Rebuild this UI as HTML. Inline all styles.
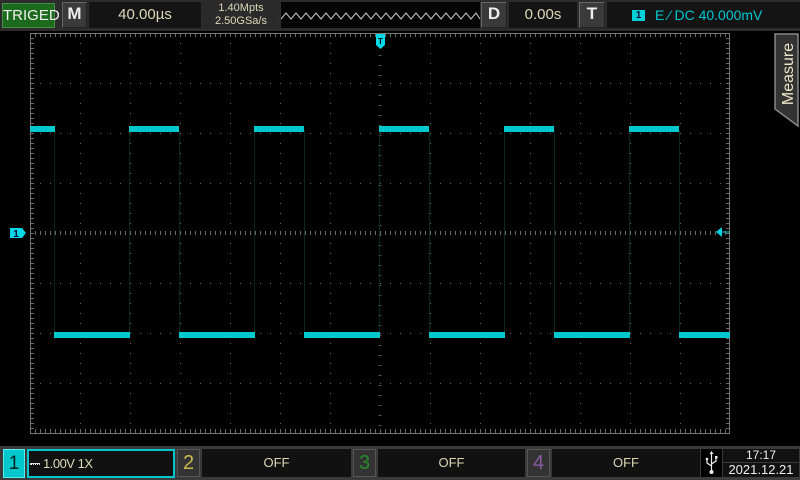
<!DOCTYPE html>
<html><head><meta charset="utf-8"><style>
body{margin:0;width:800px;height:480px;background:#000;overflow:hidden;position:relative;font-family:"Liberation Sans",sans-serif}
.a{position:absolute;box-sizing:border-box}
.btn{background:#3a3a3a;border:1px solid #666;border-right-color:#222;border-bottom-color:#222;color:#eee;font-weight:bold;font-size:17px;text-align:center;line-height:22px}
.dk{background:#141414;color:#ddd8b8;text-align:center}
</style></head><body>
<div class="a" style="left:0;top:0;width:800px;height:31px;background:#2c2c2c"></div>
<div class="a" style="left:2px;top:3px;width:53px;height:25px;background:#1c6a1c;border:1px solid #4a8a4a;color:#eee;font-size:15px;line-height:23px;text-align:center">TRIGED</div>
<div class="a btn" style="left:62px;top:2px;width:25px;height:26px">M</div>
<div class="a dk" style="left:89px;top:2px;width:112px;height:26px;font-size:15px;line-height:26px">40.00µs</div>
<div class="a dk" style="left:203px;top:2px;width:76px;height:12px;font-size:11px;line-height:12px;background:#2a2a2a">1.40Mpts</div>
<div class="a dk" style="left:203px;top:15px;width:76px;height:13px;font-size:11px;line-height:13px;background:#2a2a2a">2.50GSa/s</div>
<div class="a" style="left:281px;top:2px;width:199px;height:26px;background:#050505"></div>
<svg class="a" style="left:281px;top:2px" width="199" height="26"><polyline fill="none" stroke="#ccc" stroke-width="1" points="0,17 5,11 10,17 15,11 20,17 25,11 30,17 35,11 40,17 45,11 50,17 55,11 60,17 65,11 70,17 75,11 80,17 85,11 90,17 95,11 100,17 105,11 110,17 115,11 120,17 125,11 130,17 135,11 140,17 145,11 150,17 155,11 160,17 165,11 170,17 175,11 180,17 185,11 190,17 195,11 199,17"/></svg>
<div class="a btn" style="left:481px;top:2px;width:26px;height:26px">D</div>
<div class="a dk" style="left:509px;top:2px;width:68px;height:26px;font-size:15px;line-height:26px">0.00s</div>
<div class="a btn" style="left:579px;top:2px;width:26px;height:26px">T</div>
<div class="a" style="left:607px;top:2px;width:193px;height:26px;background:#141414"></div>
<div class="a" style="left:632px;top:10px;width:13px;height:11px;background:#00d0d8;color:#003;font-size:10px;font-weight:bold;line-height:11px;text-align:center">1</div>
<div class="a" style="left:655px;top:7px;color:#00c8d0;font-size:14px;line-height:17px">E ⁄ DC 40.000mV</div>

<svg class="a" style="left:0;top:0" width="800" height="480">
<g stroke="#6a6a6a" stroke-width="1">
<g stroke-dasharray="1 9">
<line x1="30" y1="83.5" x2="730" y2="83.5"/><line x1="30" y1="133.5" x2="730" y2="133.5"/><line x1="30" y1="183.5" x2="730" y2="183.5"/><line x1="30" y1="283.5" x2="730" y2="283.5"/><line x1="30" y1="333.5" x2="730" y2="333.5"/><line x1="30" y1="383.5" x2="730" y2="383.5"/>
<line x1="80.5" y1="33" x2="80.5" y2="433"/><line x1="130.5" y1="33" x2="130.5" y2="433"/><line x1="180.5" y1="33" x2="180.5" y2="433"/><line x1="230.5" y1="33" x2="230.5" y2="433"/><line x1="280.5" y1="33" x2="280.5" y2="433"/><line x1="330.5" y1="33" x2="330.5" y2="433"/><line x1="430.5" y1="33" x2="430.5" y2="433"/><line x1="480.5" y1="33" x2="480.5" y2="433"/><line x1="530.5" y1="33" x2="530.5" y2="433"/><line x1="580.5" y1="33" x2="580.5" y2="433"/><line x1="630.5" y1="33" x2="630.5" y2="433"/><line x1="680.5" y1="33" x2="680.5" y2="433"/>
</g>
<line x1="30" y1="233" x2="730" y2="233" stroke-width="4" stroke-dasharray="1 4"/>
<line x1="380" y1="33" x2="380" y2="433" stroke-width="3" stroke-dasharray="1 9" stroke-dashoffset="-2" stroke="#555"/>
<line x1="30" y1="35" x2="730" y2="35" stroke-width="4" stroke-dasharray="1 4"/>
<line x1="30" y1="431" x2="730" y2="431" stroke-width="4" stroke-dasharray="1 4"/>
<line x1="32" y1="33" x2="32" y2="433" stroke-width="4" stroke-dasharray="1 4"/>
<line x1="728" y1="33" x2="728" y2="433" stroke-width="4" stroke-dasharray="1 4"/>
</g>
<rect x="30.5" y="33.5" width="699" height="400" fill="none" stroke="#777"/>
<g stroke="#0a2620" stroke-width="1">
<line x1="54.5" y1="130" x2="54.5" y2="334"/><line x1="129.5" y1="130" x2="129.5" y2="334"/><line x1="179.5" y1="130" x2="179.5" y2="334"/><line x1="254.5" y1="130" x2="254.5" y2="334"/><line x1="304.5" y1="130" x2="304.5" y2="334"/><line x1="379.5" y1="130" x2="379.5" y2="334"/><line x1="429.5" y1="130" x2="429.5" y2="334"/><line x1="504.5" y1="130" x2="504.5" y2="334"/><line x1="554.5" y1="130" x2="554.5" y2="334"/><line x1="629.5" y1="130" x2="629.5" y2="334"/><line x1="679.5" y1="130" x2="679.5" y2="334"/>
</g>
<g fill="#00c8cc">
<rect x="30" y="126" width="25" height="6"/><rect x="129" y="126" width="50" height="6"/><rect x="254" y="126" width="50" height="6"/><rect x="379" y="126" width="50" height="6"/><rect x="504" y="126" width="50" height="6"/><rect x="629" y="126" width="50" height="6"/>
<rect x="54" y="332" width="76" height="6"/><rect x="179" y="332" width="76" height="6"/><rect x="304" y="332" width="76" height="6"/><rect x="429" y="332" width="76" height="6"/><rect x="554" y="332" width="76" height="6"/><rect x="679" y="332" width="51" height="6"/>
</g>
<path d="M376 34h9v11l-4.5 4l-4.5-4z" fill="#00d8e8"/>
<text x="380.5" y="44" font-size="8" font-weight="bold" text-anchor="middle" fill="#000" font-family="Liberation Sans">T</text>
<path d="M10 228h12l4 5l-4 5h-12z" fill="#00d8e8"/>
<text x="16" y="237" font-size="10" font-weight="bold" text-anchor="middle" fill="#003" font-family="Liberation Sans">1</text>
<path d="M716 232l6-5v10z" fill="#00d0e0"/><line x1="720" y1="232" x2="730" y2="232" stroke="#00d0e0"/>
<path d="M775 34h23v92l-23-17z" fill="#333" stroke="#888" stroke-width="1.5"/>
<text transform="translate(793,74) rotate(-90)" font-size="16" text-anchor="middle" fill="#eee6c8" font-family="Liberation Sans">Measure</text>
</svg>

<div class="a" style="left:0;top:446px;width:800px;height:34px;background:#3a3a3a"></div>
<div class="a" style="left:3px;top:449px;width:22px;height:29px;background:#00c8cc;border:1px solid #5ee;color:#022;font-size:19px;line-height:28px;text-align:center">1</div>
<div class="a" style="left:27px;top:449px;width:148px;height:29px;background:#111;border:2px solid #00c8cc;color:#ddd8b8;font-size:13px;line-height:25px;padding-left:14px;letter-spacing:-0.5px">1.00V 1X</div>
<div class="a" style="left:30px;top:463px;width:10px;height:2px;border-top:1px solid #ddd;border-bottom:1px dotted #ddd"></div>
<div class="a" style="left:177px;top:449px;width:23px;height:28px;background:#333;border:1px solid #555;color:#c8b850;font-size:20px;line-height:27px;text-align:center">2</div>
<div class="a dk" style="left:202px;top:449px;width:149px;height:28px;background:#111;font-size:13px;line-height:28px">OFF</div>
<div class="a" style="left:353px;top:449px;width:23px;height:28px;background:#333;border:1px solid #555;color:#2a8a2a;font-size:20px;line-height:27px;text-align:center">3</div>
<div class="a dk" style="left:378px;top:449px;width:147px;height:28px;background:#111;font-size:13px;line-height:28px">OFF</div>
<div class="a" style="left:527px;top:449px;width:23px;height:28px;background:#333;border:1px solid #555;color:#8a5aa0;font-size:20px;line-height:27px;text-align:center">4</div>
<div class="a dk" style="left:552px;top:449px;width:148px;height:28px;background:#111;font-size:13px;line-height:28px">OFF</div>
<div class="a" style="left:701px;top:449px;width:21px;height:28px;background:#000"></div>
<svg class="a" style="left:701px;top:449px" width="21" height="28"><g stroke="#eee" fill="none" stroke-width="1.2"><line x1="10.5" y1="4" x2="10.5" y2="23"/><path d="M6 10v4l4.5 3M15 9v3l-4.5 3"/></g><circle cx="10.5" cy="23" r="2" fill="#eee"/><path d="M8.5 5l2-3l2 3z" fill="#eee"/><rect x="14" y="7" width="2.5" height="2.5" fill="#eee"/><circle cx="6" cy="10" r="1.3" fill="#eee"/></svg>
<div class="a" style="left:723px;top:449px;width:76px;height:13px;background:#111;color:#eee;font-size:12px;line-height:13px;text-align:center">17:17</div>
<div class="a" style="left:723px;top:463px;width:76px;height:14px;background:#111;color:#eee;font-size:13px;line-height:14px;text-align:center">2021.12.21</div>
</body></html>
